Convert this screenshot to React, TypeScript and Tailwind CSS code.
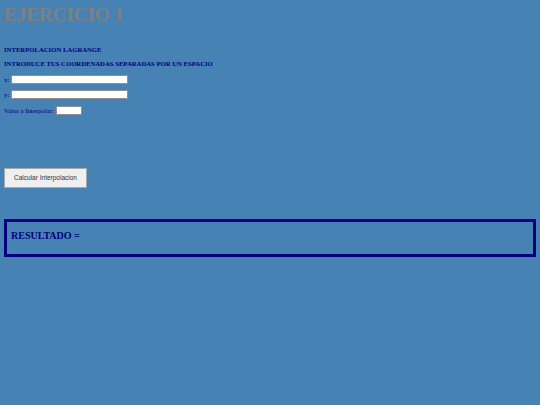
import React from "react";

const serif = "font-['Liberation_Serif','Times_New_Roman',serif]";

const Field = ({
	label,
	width,
	className,
}: {
	label: string;
	width: string;
	className: string;
}) => (
	<div className={`flex items-center gap-[2px] ${className}`}>
		<span className="text-[6.8px] leading-[9px] text-[#000080]">{label}</span>
		<input
			type="text"
			className={`h-[9px] ${width} border border-[#8f8f8f] bg-white outline-none`}
		/>
	</div>
);

export default function App() {
	return (
		<div className={`h-[405px] w-[540px] overflow-hidden bg-[#4682b4] ${serif}`}>
			<div className="flex flex-col pl-[4px]">
				<h1 className="mt-[4px] text-[19px] leading-[22px] font-bold text-[#808080]">
					EJERCICIO 1
				</h1>
				<h4 className="mt-[20px] text-[6.7px] leading-[8px] font-bold text-[#000080]">
					INTERPOLACION LAGRANGE
				</h4>
				<h4 className="mt-[5.5px] text-[6.7px] leading-[8px] font-bold text-[#000080]">
					INTRODUCE TUS COORDENADAS SEPARADAS POR UN ESPACIO
				</h4>
				<Field label="x:" width="w-[117px]" className="mt-[7.5px]" />
				<Field label="y:" width="w-[117px]" className="mt-[6px]" />
				<Field label="Valor a Interpolar:" width="w-[26px]" className="mt-[7px]" />
				<button
					type="button"
					className="mt-[53px] h-[20px] w-[83px] border border-[#a8a8a8] bg-[#efefef] font-['Liberation_Sans',Arial,sans-serif] text-[6.5px] text-[#333333]"
				>
					Calcular Interpolacion
				</button>
				<div className="mt-[31px] flex h-[38px] w-[532px] items-start border-[3px] border-[#000080] pt-[8px] pl-[4px]">
					<span className="text-[10px] leading-[12px] font-bold text-[#000080]">
						RESULTADO =
					</span>
				</div>
			</div>
		</div>
	);
}
